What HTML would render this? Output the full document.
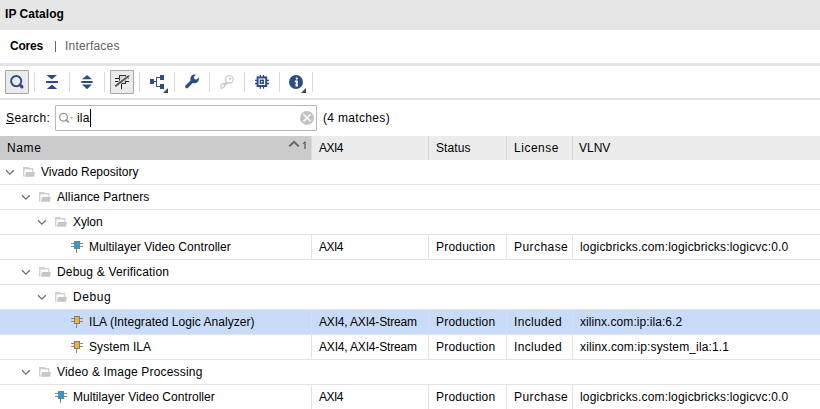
<!DOCTYPE html>
<html><head><meta charset="utf-8">
<style>
*{box-sizing:border-box;margin:0;padding:0}
html,body{width:820px;height:409px;overflow:hidden;background:#fff;font-family:"Liberation Sans",sans-serif;font-size:12px;color:#000;line-height:14px}
.abs{position:absolute;white-space:nowrap}
svg{position:absolute;overflow:visible}
.tbs{position:absolute;width:1px;top:72px;height:20px;background:#d9d9d9}
.btn{position:absolute;width:24px;height:24px;border:1px solid #a6a6a6;border-radius:1px;background:#ebebeb}
.row{position:absolute;left:0;width:820px;height:25px;border-bottom:1px solid #e3e3e3}
.sel{background:#c8dcf9}
.cs{position:absolute;top:0;width:1px;height:24px;background:#e3e3e3}
.sel .cs{background:#d6e0f0}
</style></head><body>

<div class="abs" style="left:0;top:0;width:820px;height:30px;background:#e6e6e6"></div>
<span class="abs" style="left:5px;top:7px;letter-spacing:0.05px;font-weight:bold">IP Catalog</span>
<span class="abs" style="left:10px;top:39px;letter-spacing:-0.2px;font-weight:bold">Cores</span>
<div class="abs" style="left:55px;top:41px;width:1px;height:11px;background:#646a6a"></div>
<span class="abs" style="left:65px;top:39px;letter-spacing:0.19px;color:#616161">Interfaces</span>
<div class="abs" style="left:0;top:63px;width:820px;height:3px;background:#e4e4e4"></div>
<div class="abs" style="left:0;top:98px;width:820px;height:2px;background:#e4e4e4"></div>
<div class="btn" style="left:5px;top:70px"></div>
<div class="btn" style="left:110px;top:70px"></div>
<div class="tbs" style="left:34px"></div>
<div class="tbs" style="left:69px"></div>
<div class="tbs" style="left:104px"></div>
<div class="tbs" style="left:139px"></div>
<div class="tbs" style="left:174px"></div>
<div class="tbs" style="left:209px"></div>
<div class="tbs" style="left:244px"></div>
<div class="tbs" style="left:279px"></div>
<div class="tbs" style="left:312px"></div>
<svg style="left:0;top:0" width="1" height="1"><circle cx="16.2" cy="81.1" r="5.1" fill="none" stroke="#2c4b87" stroke-width="1.9"/><path d="M20.8 85.7 L22 86.9" stroke="#2c4b87" stroke-width="3.1" stroke-linecap="round"/></svg>
<svg style="left:0;top:0" width="1" height="1"><path d="M46.5 75 H57 L51.75 79.5 Z" fill="#2c4b87"/><rect x="46" y="81" width="12" height="2" fill="#2c4b87"/><path d="M46.8 89 H57.2 L52 84.5 Z" fill="#2c4b87"/></svg>
<svg style="left:0;top:0" width="1" height="1"><path d="M82 79.3 H92 L87 75 Z" fill="#2c4b87"/><rect x="81.3" y="81" width="11.4" height="2" fill="#2c4b87"/><path d="M82 84.5 H92 L87 89.2 Z" fill="#2c4b87"/></svg>
<svg style="left:0;top:0" width="1" height="1"><path d="M115 78.5H119M115 81.5H119M126 78.5H129M126 81.5H129M121.5 84V89" stroke="#222" stroke-width="1"/><rect x="119.5" y="75.5" width="6" height="8" fill="#d6d6d6" stroke="#333" stroke-width="1"/><path d="M115.8 85.6 L128.4 76.4" stroke="#ebebeb" stroke-width="3.4"/><path d="M115.8 85.8 L128.4 76.2" stroke="#555" stroke-width="2" stroke-linecap="round"/></svg>
<svg style="left:0;top:0" width="1" height="1"><rect x="150" y="79" width="4" height="5" fill="#2c4b87"/><rect x="160" y="75" width="4" height="5" fill="#2c4b87"/><rect x="160" y="84" width="4" height="5" fill="#2c4b87"/><path d="M154 81.5H156.5M160 77.5H156.5V86.5H160" fill="none" stroke="#2c4b87" stroke-width="1"/><path d="M168 88 V93 H163 Z" fill="#474747"/></svg>
<svg style="left:0;top:0" width="1" height="1"><path d="M186.8 86.6 L192.5 80.9" stroke="#2c4b87" stroke-width="3.4" stroke-linecap="round"/><circle cx="194.6" cy="78.9" r="4.3" fill="#2c4b87"/><circle cx="195.8" cy="77.6" r="1.9" fill="#fff"/><path d="M195.8 77.6 L199.5 73.9" stroke="#fff" stroke-width="3.8"/></svg>
<svg style="left:0;top:0" width="1" height="1"><circle cx="229.4" cy="79.3" r="3.8" fill="none" stroke="#c6c6c6" stroke-width="1.2"/><circle cx="230.2" cy="78.6" r="1.2" fill="#c6c6c6"/><path d="M226.4 82 L224 84.4 L223 83.4 L221 85.4 V88.2 H222.4 L227.7 83" fill="none" stroke="#c6c6c6" stroke-width="1.1"/></svg>
<svg style="left:0;top:0" width="1" height="1"><rect x="257.6" y="77.45" width="8.6" height="8.6" fill="none" stroke="#2c4b87" stroke-width="2"/><rect x="260.35" y="80.3" width="2.9" height="2.9" fill="none" stroke="#2c4b87" stroke-width="1.5"/><path d="M260.3 75V77M263.5 75V77M260.3 86.5V88.7M263.5 86.5V88.7M255 80.3H257M255 83.5H257M266.8 80.3H269M266.8 83.5H269" stroke="#2c4b87" stroke-width="1.3"/></svg>
<svg style="left:0;top:0" width="1" height="1"><circle cx="296" cy="82" r="7" fill="#2c4b87"/><circle cx="296.8" cy="78.6" r="1.1" fill="#fff"/><path d="M294.8 81.3 H297.2 L296.2 85.5 H298" fill="none" stroke="#fff" stroke-width="1.8" stroke-linejoin="round"/><path d="M306 88 V93 H301 Z" fill="#474747"/></svg>
<span class="abs" style="left:6px;top:111px;letter-spacing:0.42px;"><u>S</u>earch:</span>
<div class="abs" style="left:55px;top:105px;width:262px;height:26px;border:1px solid #b8b8b8;border-radius:1px;background:#fff"></div>
<svg style="left:0;top:0" width="1" height="1"><circle cx="63.5" cy="117.2" r="3.9" fill="none" stroke="#999" stroke-width="1.3"/><path d="M66.3 120 L68.2 121.9" stroke="#999" stroke-width="1.8" stroke-linecap="round"/><path d="M70 117.3 H73 L71.5 118.8 Z" fill="#888"/></svg>
<span class="abs" style="left:77px;top:111px;letter-spacing:0.2px;">ila</span>
<div class="abs" style="left:90px;top:109px;width:1px;height:18px;background:#000"></div>
<svg style="left:0;top:0" width="1" height="1"><circle cx="307" cy="117.9" r="7" fill="#c2c2c2"/><path d="M303.4 114.3 L310.6 121.5 M310.6 114.3 L303.4 121.5" stroke="#fff" stroke-width="1.5"/></svg>
<span class="abs" style="left:323px;top:111px;letter-spacing:0.33px;">(4 matches)</span>
<div class="abs" style="left:0;top:136px;width:820px;height:24px;background:#ececec"></div>
<div class="abs" style="left:0;top:136px;width:311px;height:24px;background:#cbcbcb"></div>
<div class="abs" style="left:311px;top:136px;width:1px;height:24px;background:#dcdcdc"></div>
<div class="abs" style="left:428px;top:136px;width:1px;height:24px;background:#d8d8d8"></div>
<div class="abs" style="left:506px;top:136px;width:1px;height:24px;background:#d8d8d8"></div>
<div class="abs" style="left:572px;top:136px;width:1px;height:24px;background:#d8d8d8"></div>
<span class="abs" style="left:7px;top:141px;letter-spacing:0.63px;">Name</span>
<svg style="left:0;top:0" width="1" height="1"><path d="M289.3 146.2 L294 141.8 L298.7 146.2" fill="none" stroke="#666" stroke-width="2"/></svg>
<svg style="left:0;top:0" width="1" height="1"><path d="M305 141.8 V149 M303 143.8 L305 141.8" fill="none" stroke="#333" stroke-width="0.95"/></svg>
<span class="abs" style="left:319px;top:141px;letter-spacing:-0.5px;">AXI4</span>
<span class="abs" style="left:436px;top:141px;letter-spacing:0.12px;">Status</span>
<span class="abs" style="left:514px;top:141px;letter-spacing:0.52px;">License</span>
<span class="abs" style="left:579px;top:141px;">VLNV</span>
<div class="row" style="top:160px">
<svg style="left:0px;top:0" width="1" height="1"><path d="M6 10.3 L9.9 14.2 L13.8 10.3" fill="none" stroke="#6e6e6e" stroke-width="1.3"/></svg>
<svg style="left:0px;top:0" width="1" height="1"><path d="M23.3 7 H28.3 L29.3 8 H33.3 V12 H32.2 V9.4 H24.4 V16.5 H23 V7.3 Z" fill="#d0d0d0"/><path d="M26 12 H34.8 L34 16.8 H25 Z" fill="#c6c6c6"/></svg>
<span class="abs" style="left:41px;top:5px;letter-spacing:0.02px;">Vivado Repository</span>
</div>
<div class="row" style="top:185px">
<svg style="left:16px;top:0" width="1" height="1"><path d="M6 10.3 L9.9 14.2 L13.8 10.3" fill="none" stroke="#6e6e6e" stroke-width="1.3"/></svg>
<svg style="left:16px;top:0" width="1" height="1"><path d="M23.3 7 H28.3 L29.3 8 H33.3 V12 H32.2 V9.4 H24.4 V16.5 H23 V7.3 Z" fill="#d0d0d0"/><path d="M26 12 H34.8 L34 16.8 H25 Z" fill="#c6c6c6"/></svg>
<span class="abs" style="left:57px;top:5px;letter-spacing:0.1px;">Alliance Partners</span>
</div>
<div class="row" style="top:210px">
<svg style="left:32px;top:0" width="1" height="1"><path d="M6 10.3 L9.9 14.2 L13.8 10.3" fill="none" stroke="#6e6e6e" stroke-width="1.3"/></svg>
<svg style="left:32px;top:0" width="1" height="1"><path d="M23.3 7 H28.3 L29.3 8 H33.3 V12 H32.2 V9.4 H24.4 V16.5 H23 V7.3 Z" fill="#d0d0d0"/><path d="M26 12 H34.8 L34 16.8 H25 Z" fill="#c6c6c6"/></svg>
<span class="abs" style="left:73px;top:5px;letter-spacing:-0.1px;">Xylon</span>
</div>
<div class="row" style="top:235px">
<svg style="left:71px;top:6px" width="1" height="1"><path d="M0 2.5H3M0 5.5H3M9 2.5H12M9 5.5H12M5.5 8V12" stroke="#8a8a8a" stroke-width="1"/><rect x="3.5" y="0.5" width="5" height="7" fill="#18a5df" stroke="#7c7c7c" stroke-width="1"/></svg>
<span class="abs" style="left:89px;top:5px;letter-spacing:0.05px;">Multilayer Video Controller</span>
<div class="cs" style="left:311px"></div>
<div class="cs" style="left:428px"></div>
<div class="cs" style="left:506px"></div>
<div class="cs" style="left:572px"></div>
<span class="abs" style="left:319px;top:5px;letter-spacing:-0.5px;">AXI4</span>
<span class="abs" style="left:436px;top:5px;letter-spacing:0.2px;">Production</span>
<span class="abs" style="left:514px;top:5px;letter-spacing:0.44px;">Purchase</span>
<span class="abs" style="left:580px;top:5px;letter-spacing:0.18px;">logicbricks.com:logicbricks:logicvc:0.0</span>
</div>
<div class="row" style="top:260px">
<svg style="left:16px;top:0" width="1" height="1"><path d="M6 10.3 L9.9 14.2 L13.8 10.3" fill="none" stroke="#6e6e6e" stroke-width="1.3"/></svg>
<svg style="left:16px;top:0" width="1" height="1"><path d="M23.3 7 H28.3 L29.3 8 H33.3 V12 H32.2 V9.4 H24.4 V16.5 H23 V7.3 Z" fill="#d0d0d0"/><path d="M26 12 H34.8 L34 16.8 H25 Z" fill="#c6c6c6"/></svg>
<span class="abs" style="left:57px;top:5px;letter-spacing:0.17px;">Debug &amp; Verification</span>
</div>
<div class="row" style="top:285px">
<svg style="left:32px;top:0" width="1" height="1"><path d="M6 10.3 L9.9 14.2 L13.8 10.3" fill="none" stroke="#6e6e6e" stroke-width="1.3"/></svg>
<svg style="left:32px;top:0" width="1" height="1"><path d="M23.3 7 H28.3 L29.3 8 H33.3 V12 H32.2 V9.4 H24.4 V16.5 H23 V7.3 Z" fill="#d0d0d0"/><path d="M26 12 H34.8 L34 16.8 H25 Z" fill="#c6c6c6"/></svg>
<span class="abs" style="left:73px;top:5px;letter-spacing:0.6px;">Debug</span>
</div>
<div class="row sel" style="top:310px">
<svg style="left:71px;top:6px" width="1" height="1"><path d="M0 2.5H3M0 5.5H3M9 2.5H12M9 5.5H12M5.5 8V12" stroke="#8a8a8a" stroke-width="1"/><rect x="3.5" y="0.5" width="5" height="7" fill="#f9ae2c" stroke="#7c7c7c" stroke-width="1"/></svg>
<span class="abs" style="left:89px;top:5px;letter-spacing:0.05px;">ILA (Integrated Logic Analyzer)</span>
<div class="cs" style="left:311px"></div>
<div class="cs" style="left:428px"></div>
<div class="cs" style="left:506px"></div>
<div class="cs" style="left:572px"></div>
<span class="abs" style="left:319px;top:5px;letter-spacing:-0.17px;">AXI4, AXI4-Stream</span>
<span class="abs" style="left:436px;top:5px;letter-spacing:0.2px;">Production</span>
<span class="abs" style="left:514px;top:5px;letter-spacing:0.34px;">Included</span>
<span class="abs" style="left:580px;top:5px;letter-spacing:0.075px;">xilinx.com:ip:ila:6.2</span>
</div>
<div class="row" style="top:335px">
<svg style="left:71px;top:6px" width="1" height="1"><path d="M0 2.5H3M0 5.5H3M9 2.5H12M9 5.5H12M5.5 8V12" stroke="#8a8a8a" stroke-width="1"/><rect x="3.5" y="0.5" width="5" height="7" fill="#f9ae2c" stroke="#7c7c7c" stroke-width="1"/></svg>
<span class="abs" style="left:89px;top:5px;letter-spacing:0.08px;">System ILA</span>
<div class="cs" style="left:311px"></div>
<div class="cs" style="left:428px"></div>
<div class="cs" style="left:506px"></div>
<div class="cs" style="left:572px"></div>
<span class="abs" style="left:319px;top:5px;letter-spacing:-0.17px;">AXI4, AXI4-Stream</span>
<span class="abs" style="left:436px;top:5px;letter-spacing:0.2px;">Production</span>
<span class="abs" style="left:514px;top:5px;letter-spacing:0.34px;">Included</span>
<span class="abs" style="left:580px;top:5px;letter-spacing:0.13px;">xilinx.com:ip:system_ila:1.1</span>
</div>
<div class="row" style="top:360px">
<svg style="left:16px;top:0" width="1" height="1"><path d="M6 10.3 L9.9 14.2 L13.8 10.3" fill="none" stroke="#6e6e6e" stroke-width="1.3"/></svg>
<svg style="left:16px;top:0" width="1" height="1"><path d="M23.3 7 H28.3 L29.3 8 H33.3 V12 H32.2 V9.4 H24.4 V16.5 H23 V7.3 Z" fill="#d0d0d0"/><path d="M26 12 H34.8 L34 16.8 H25 Z" fill="#c6c6c6"/></svg>
<span class="abs" style="left:57px;top:5px;letter-spacing:0.18px;">Video &amp; Image Processing</span>
</div>
<div class="row" style="top:385px">
<svg style="left:55px;top:6px" width="1" height="1"><path d="M0 2.5H3M0 5.5H3M9 2.5H12M9 5.5H12M5.5 8V12" stroke="#8a8a8a" stroke-width="1"/><rect x="3.5" y="0.5" width="5" height="7" fill="#18a5df" stroke="#7c7c7c" stroke-width="1"/></svg>
<span class="abs" style="left:73px;top:5px;letter-spacing:0.05px;">Multilayer Video Controller</span>
<div class="cs" style="left:311px"></div>
<div class="cs" style="left:428px"></div>
<div class="cs" style="left:506px"></div>
<div class="cs" style="left:572px"></div>
<span class="abs" style="left:319px;top:5px;letter-spacing:-0.5px;">AXI4</span>
<span class="abs" style="left:436px;top:5px;letter-spacing:0.2px;">Production</span>
<span class="abs" style="left:514px;top:5px;letter-spacing:0.44px;">Purchase</span>
<span class="abs" style="left:580px;top:5px;letter-spacing:0.18px;">logicbricks.com:logicbricks:logicvc:0.0</span>
</div>
</body></html>
